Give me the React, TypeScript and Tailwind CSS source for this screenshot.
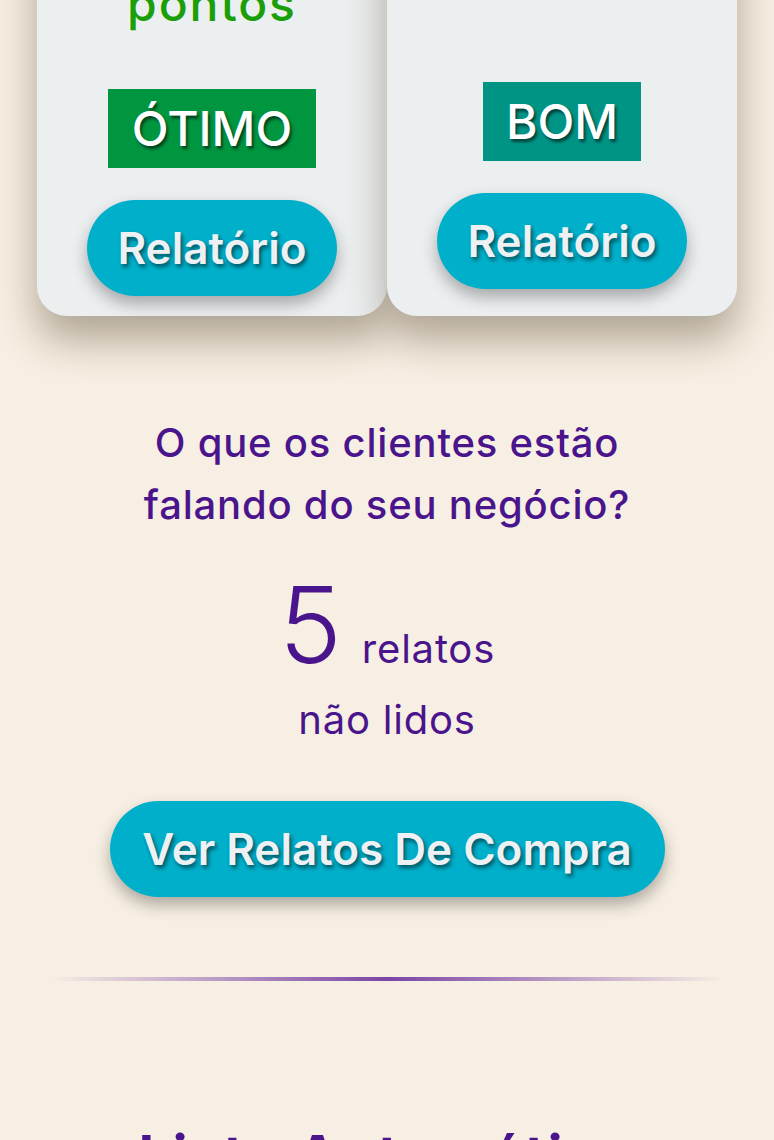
const font = "font-['Inter','Open_Sans',sans-serif]"

const ReportButton = () => (
	<button className="h-[96px] w-[250px] rounded-full bg-[#00b0cb] text-[44px] font-semibold text-[#eef1f3] shadow-[0_8px_16px_rgba(0,0,0,0.3)] [text-shadow:2px_3px_4px_rgba(0,0,0,0.55)]">
		Relatório
	</button>
)

export default function App() {
	return (
		<div className={`${font} min-h-[1140px] overflow-hidden bg-[#f7efe3]`}>
			{/* score cards */}
			<div className="-mt-[130px] grid grid-cols-2 px-[37px]">
				<div className="relative flex flex-col items-center rounded-[30px] bg-[#eceff0] pb-[20px] pt-[35px] shadow-[0_24px_40px_rgba(60,45,20,0.38)]">
					<p className="text-[56px] font-semibold leading-[70px] text-[#1a9e0a]">820</p>
					<p className="mb-[56px] text-[48px] font-medium leading-[58px] tracking-[0.04em] text-[#1a9e0a]">pontos</p>
					<div className="flex h-[79px] w-[208px] items-center justify-center bg-[#009640] text-[48px] font-medium text-white [text-shadow:2px_3px_3px_rgba(0,0,0,0.55)]">
						ÓTIMO
					</div>
					<div className="mt-[32px]">
						<ReportButton />
					</div>
				</div>
				<div className="relative flex flex-col items-center justify-end rounded-[30px] bg-[#eceff0] pb-[27px] shadow-[0_24px_40px_rgba(60,45,20,0.38)]">
					<div className="flex h-[79px] w-[158px] items-center justify-center bg-[#009485] text-[48px] font-medium text-white [text-shadow:2px_3px_3px_rgba(0,0,0,0.55)]">
						BOM
					</div>
					<div className="mt-[32px]">
						<ReportButton />
					</div>
				</div>
			</div>

			{/* relatos */}
			<div className="mt-[96px] flex flex-col items-center tracking-[0.05em] text-[#4a148c]">
				<h2 className="text-center text-[40px] font-medium leading-[62px]">
					O que os clientes estão
					<br />
					falando do seu negócio?
				</h2>
				<div className="mt-[34px] flex items-baseline gap-[20px]">
					<span className="text-[106px] font-light leading-[110px] tracking-normal">5</span>
					<span className="text-[40px] leading-[50px]">relatos</span>
				</div>
				<p className="mt-[10px] text-[40px] leading-[60px]">não lidos</p>
				<button className="mt-[51px] h-[96px] w-[555px] rounded-full bg-[#00b0cb] text-[44px] font-semibold tracking-normal text-[#eef1f3] shadow-[0_8px_16px_rgba(0,0,0,0.3)] [text-shadow:2px_3px_4px_rgba(0,0,0,0.55)]">
					Ver Relatos De Compra
				</button>
			</div>

			<div className="mx-[50px] mt-[80px] h-[4px] bg-[linear-gradient(90deg,transparent,#7b45a6,transparent)]" />

			<h2 className="mt-[140px] text-center text-[56px] font-bold leading-[70px] tracking-[0.04em] text-[#4a148c]">
				Lista Automática
			</h2>
		</div>
	)
}
